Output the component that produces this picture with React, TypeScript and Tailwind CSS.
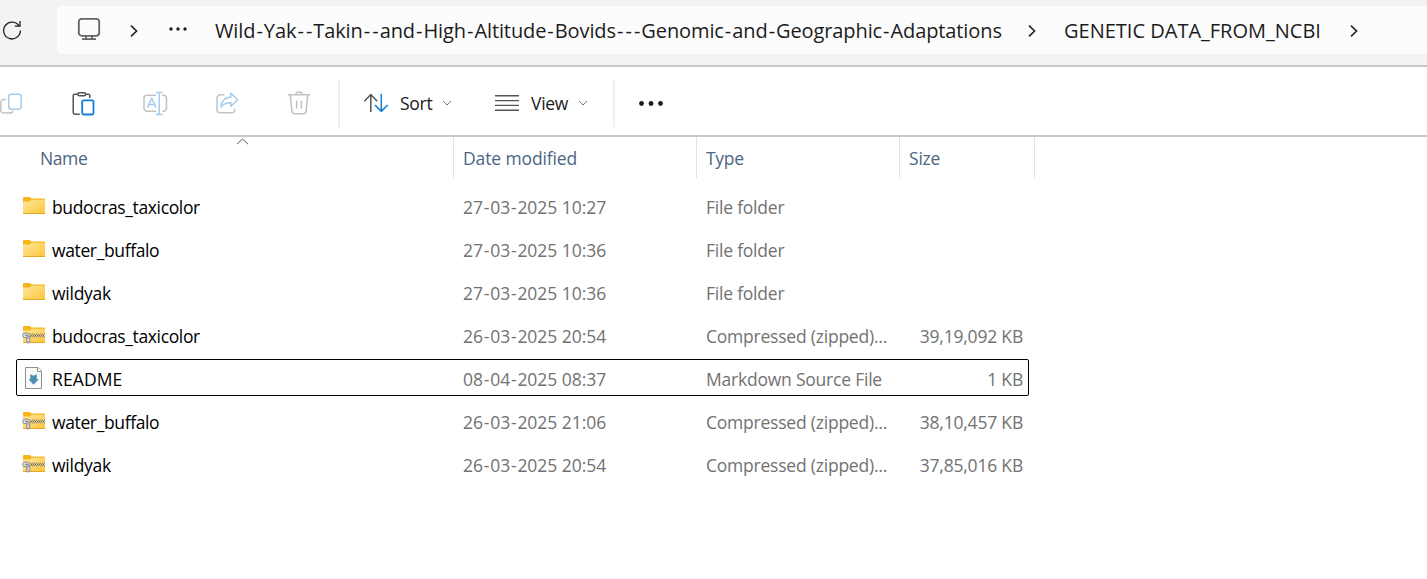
import type { ReactNode } from "react";

type Kind = "folder" | "zip" | "markdown";

interface Entry {
  name: string;
  nameTracking: string;
  kind: Kind;
  modified: string;
  type: string;
  size: string;
  selected?: boolean;
}

const entries: Entry[] = [
  { name: "budocras_taxicolor", nameTracking: "tracking-[-0.37px]", kind: "folder", modified: "27-03-2025 10:27", type: "File folder", size: "" },
  { name: "water_buffalo", nameTracking: "tracking-[-0.37px]", kind: "folder", modified: "27-03-2025 10:36", type: "File folder", size: "" },
  { name: "wildyak", nameTracking: "tracking-[-0.25px]", kind: "folder", modified: "27-03-2025 10:36", type: "File folder", size: "" },
  { name: "budocras_taxicolor", nameTracking: "tracking-[-0.37px]", kind: "zip", modified: "26-03-2025 20:54", type: "Compressed (zipped)...", size: "39,19,092 KB" },
  { name: "README", nameTracking: "tracking-[0.1px]", kind: "markdown", modified: "08-04-2025 08:37", type: "Markdown Source File", size: "1 KB", selected: true },
  { name: "water_buffalo", nameTracking: "tracking-[-0.37px]", kind: "zip", modified: "26-03-2025 21:06", type: "Compressed (zipped)...", size: "38,10,457 KB" },
  { name: "wildyak", nameTracking: "tracking-[-0.25px]", kind: "zip", modified: "26-03-2025 20:54", type: "Compressed (zipped)...", size: "37,85,016 KB" },
];

/* Gives hyphens a wider advance than the surrounding letters. */
function Hyphenated({ text, hyphen }: { text: string; hyphen: string }) {
  return (
    <>
      {text.split(/(-)/).map((part, i) =>
        part === "-" ? (
          <span key={i} className={hyphen}>{part}</span>
        ) : (
          part
        ),
      )}
    </>
  );
}

function FileIcon({ kind }: { kind: Kind }) {
  if (kind === "markdown") {
    return (
      <svg className="mt-px h-6 w-6" viewBox="0 0 24 24" fill="none">
        <path d="M3.5 1.5H16L19.5 5V22.5H3.5Z" fill="#fafafa" stroke="#8f8f8f" />
        <path d="M15.5 1.5V5.5H19.5" fill="#fff" stroke="#8f8f8f" />
        <path d="M8.3 8.3L11.5 9.8L14.8 8.3V13.2H16.8L11.5 18.7L6.5 13.2H8.3Z" fill="#4a8fb0" />
      </svg>
    );
  }
  return (
    <svg className="mt-[5px] h-6 w-6" viewBox="0 0 24 24" fill="none">
      <defs>
        <linearGradient id="folder-face" x1="0" y1="0" x2="1" y2="1">
          <stop offset="0" stopColor="#ffe69c" />
          <stop offset="1" stopColor="#fcc63a" />
        </linearGradient>
      </defs>
      <path d="M1 2.2Q1 1 2.2 1H7.4Q8.2 1 8.7 1.7L9.6 2.6H22.4Q23 2.6 23 3.4V8H1Z" fill="#f5b51b" />
      <path d="M1 5.4H7.6Q8.4 5.4 9 4.6L9.6 3.8H23V17.8H1Z" fill="url(#folder-face)" />
      <path d="M1 17.5H23" stroke="#e5a823" strokeWidth="1" />
      {kind === "zip" && (
        <g>
          <path d="M8 8.7H23V12.3H8Z" fill="#e8cf87" />
          <path d="M8 9.2H23M8 11.8H23" stroke="#8d8266" strokeWidth="1" strokeDasharray="1 1" />
          <path d="M8 10.5H23" stroke="#6f6a5c" strokeWidth="1.4" strokeDasharray="1 1" strokeDashoffset="1" />
          <rect x="0.8" y="8.2" width="6.4" height="4.3" rx="1.4" fill="#e0e0e0" stroke="#8c8c8c" />
          <path d="M3 10.3H6" stroke="#777" />
          <rect x="4.6" y="11.5" width="3.2" height="6.5" rx="1" fill="#b8b8b8" stroke="#8c8c8c" strokeWidth="0.8" />
          <path d="M6.2 14.2V16.2" stroke="#fff" strokeWidth="0.9" />
        </g>
      )}
    </svg>
  );
}

function Crumb({ className }: { className: string }) {
  return (
    <svg className={`mt-0.5 h-3.5 w-2 shrink-0 ${className}`} viewBox="0 0 8 14" fill="none">
      <path d="M1 1.6L6.6 7L1 12.4" stroke="#222" strokeWidth="1.6" />
    </svg>
  );
}

function Caret({ className }: { className: string }) {
  return (
    <svg className={`h-1.5 w-2.5 shrink-0 ${className}`} viewBox="0 0 10 6" fill="none">
      <path d="M1 1L5 5L9 1" stroke="#777" strokeWidth="1" />
    </svg>
  );
}

function Tool({ children, className }: { children: ReactNode; className: string }) {
  return (
    <svg className={`h-7 w-7 shrink-0 ${className}`} viewBox="0 0 28 28" fill="none" strokeWidth="1.5" strokeLinejoin="round">
      {children}
    </svg>
  );
}

function AddressBar() {
  return (
    <div className="flex h-[67px] items-start border-b-2 border-[#c8c8c8] bg-[#f3f3f3] pt-1.5">
      <div className="flex h-12 w-[57px] items-center">
        <svg className="ml-0.5 h-5 w-5" viewBox="0 0 20 20" fill="none">
          <path d="M17.2 6.2A8.4 8.4 0 1 0 18.4 10.4M18 1V6.2H12.8" stroke="#222" strokeWidth="1.3" />
        </svg>
      </div>
      <div className="flex h-12 flex-1 items-center rounded-l-md bg-[#fcfcfc] text-[20px] text-[#1b1b1b]">
        <svg className="mb-0.5 ml-5 h-6 w-6 shrink-0" viewBox="0 0 24 24" fill="none" stroke="#636363" strokeWidth="1.8">
          <rect x="1.8" y="1.8" width="20.4" height="17" rx="3" />
          <path d="M9 19V22M15 19V22M5 22.2H19" />
        </svg>
        <Crumb className="ml-[29px]" />
        <svg className="mb-[3px] ml-[31px] h-1 w-[18px] shrink-0" viewBox="0 0 18 4" fill="#1b1b1b">
          <circle cx="2" cy="2" r="1.7" />
          <circle cx="9" cy="2" r="1.7" />
          <circle cx="16" cy="2" r="1.7" />
        </svg>
        <span className="ml-7 mt-0.5 w-[788px] shrink-0 whitespace-nowrap tracking-[-0.11px]">
          <Hyphenated
            text="Wild-Yak--Takin--and-High-Altitude-Bovids---Genomic-and-Geographic-Adaptations"
            hyphen="pl-[1.05px] tracking-[1px]"
          />
        </span>
        <Crumb className="ml-[25px]" />
        <span className="ml-7 mt-0.5 w-[258px] shrink-0 whitespace-nowrap">GENETIC DATA_FROM_NCBI</span>
        <Crumb className="ml-[28px]" />
      </div>
    </div>
  );
}

function CommandBar() {
  return (
    <div className="flex h-[70px] items-center border-b-2 border-[#c8c8c8] pt-[3px] text-[17.5px] text-[#1b1b1b]">
      <Tool className="ml-[-2px]">
        <path d="M8 10.5H6A3 3 0 0 0 2.8 13.5V21A3 3 0 0 0 6 24H12Q14.5 24 15 22" stroke="#c3c3c3" />
        <rect x="10.7" y="5.2" width="12.5" height="15" rx="2.6" stroke="#a3cdef" />
      </Tool>
      <Tool className="ml-[42px]">
        <path d="M10 5.2H6.5Q5.2 5.2 5.2 6.5V23.5Q5.2 25.2 6.6 25.2H11.8M17.5 5.2H20.5Q21.8 5.2 21.8 6.5V9" stroke="#555" />
        <rect x="9.8" y="3.7" width="7.8" height="3" rx="1.5" stroke="#555" />
        <rect x="14.2" y="11.3" width="11.3" height="14.2" rx="1.4" stroke="#0f7fda" strokeWidth="1.8" />
      </Tool>
      <Tool className="ml-[45px]">
        <path d="M15 6.2H6A3 3 0 0 0 3 9.2V19A3 3 0 0 0 6 22.2H15M21.3 6.2H22.5A3 3 0 0 1 25.5 9.2V19A3 3 0 0 1 22.5 22.2H21.3" stroke="#c3c3c3" />
        <path d="M6.5 18.6L10.7 9L14.9 18.6M7.9 15.6H13.5M18.3 3.8V25.2M14.8 3.6H21.8M14.8 25.4H21.8" stroke="#a3cdef" />
      </Tool>
      <Tool className="ml-[45px]">
        <path d="M10.5 5.8H6A3 3 0 0 0 3 8.8V20.8A3 3 0 0 0 6 23.8H17.5A3 3 0 0 0 20.8 20.6V19.5" stroke="#c3c3c3" />
        <path d="M16.8 4L23.8 10.8L16.8 17.3V13.8Q11 13.6 7 17.8Q7.5 8.9 16.8 8Z" stroke="#a3cdef" />
      </Tool>
      <Tool className="ml-11">
        <path d="M2 5.8H24M9.8 5.6Q10 3 13 3Q16 3 16.2 5.6M4.2 6.2L6 22.7Q6.3 24.8 8.2 24.8H17.8Q19.7 24.8 20 22.7L21.8 6.2M10.7 11.5V19.5M15.3 11.5V19.5" stroke="#c3c3c3" />
      </Tool>
      <div className="ml-6 h-12 w-0.5 bg-[#eeeeee]" />
      <Tool className="ml-[22px]">
        <path d="M8.8 23V5.8M2.4 12.2L8.8 5.6L15.2 12.2" stroke="#555" />
        <path d="M19.3 5V22M13 16L19.3 22.4L25.7 16" stroke="#0f7fda" />
      </Tool>
      <span className="ml-[10px] mt-0.5 w-8 whitespace-nowrap tracking-[-0.3px]">Sort</span>
      <Caret className="ml-[10px]" />
      <Tool className="ml-[41px]">
        <path d="M2 6.7H26M2 11.6H26M2 16.4H26M2 21.2H26" stroke="#555" strokeWidth="1.4" />
      </Tool>
      <span className="ml-[10px] mt-0.5 w-[38px] whitespace-nowrap tracking-[-0.3px]">View</span>
      <Caret className="ml-[9px]" />
      <div className="ml-[25px] h-12 w-0.5 bg-[#eeeeee]" />
      <svg className="ml-6 mt-0.5 h-[5px] w-6" viewBox="0 0 24 5" fill="#1b1b1b">
        <circle cx="2.5" cy="2.5" r="2.4" />
        <circle cx="12" cy="2.5" r="2.4" />
        <circle cx="21.5" cy="2.5" r="2.4" />
      </svg>
    </div>
  );
}

function ColumnHeader() {
  return (
    <div className="flex h-[41px] text-[17.5px] leading-[43px] text-[#4b6584]">
      <div className="relative w-[454px] border-r border-[#e3e3e3] pl-10">
        <span className="tracking-[-0.4px]">Name</span>
        <svg className="absolute left-[236px] top-px h-[7px] w-[13px]" viewBox="0 0 13 7" fill="none">
          <path d="M1 6.2L6.5 1L12 6.2" stroke="#555" />
        </svg>
      </div>
      <div className="w-[243px] border-r border-[#e3e3e3] pl-[9px]">
        <span className="tracking-[-0.12px]">Date modified</span>
      </div>
      <div className="w-[203px] border-r border-[#e3e3e3] pl-[9px]">
        <span className="tracking-[-0.3px]">Type</span>
      </div>
      <div className="w-[135px] border-r border-[#e3e3e3] pl-[9px]">
        <span className="tracking-[-0.2px]">Size</span>
      </div>
    </div>
  );
}

function Row({ entry }: { entry: Entry }) {
  return (
    <div
      className={`flex h-[37px] w-[1013px] items-center whitespace-nowrap rounded-[2px] border pl-[5px] text-[17.5px] text-[#727272] ${entry.selected ? "border-black" : "border-transparent"}`}
    >
      <FileIcon kind={entry.kind} />
      <div className="ml-[6px] mt-1 w-[411px] text-black">
        <span className={entry.nameTracking}>{entry.name}</span>
      </div>
      <div className="mt-1 w-[243px] tracking-[-0.03px]">
        <Hyphenated text={entry.modified} hyphen="pl-[0.8px] tracking-[0.8px]" />
      </div>
      <div className="mt-1 w-[190px] tracking-[-0.22px]">{entry.type}</div>
      <div className="mt-1 w-[127px] text-right tracking-[-0.2px]">{entry.size}</div>
    </div>
  );
}

export default function App() {
  return (
    <div className="h-[579px] w-full overflow-hidden bg-white font-['Open_Sans','Noto_Sans',sans-serif]">
      <AddressBar />
      <CommandBar />
      <ColumnHeader />
      <div className="ml-4 mt-[9px] flex flex-col gap-1.5">
        {entries.map((entry) => (
          <Row key={`${entry.kind}-${entry.name}`} entry={entry} />
        ))}
      </div>
    </div>
  );
}
